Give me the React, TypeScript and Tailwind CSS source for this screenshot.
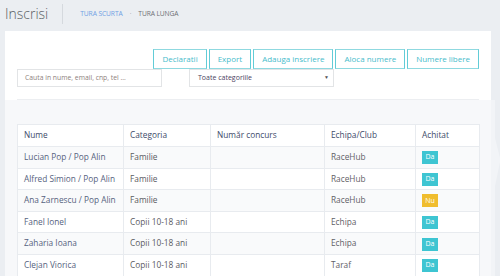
import React from "react";

const rows = [
  { name: "Lucian Pop / Pop Alin", cat: "Familie", club: "RaceHub", paid: true },
  { name: "Alfred Simion / Pop Alin", cat: "Familie", club: "RaceHub", paid: true },
  { name: "Ana Zarnescu / Pop Alin", cat: "Familie", club: "RaceHub", paid: false },
  { name: "Fanel Ionel", cat: "Copii 10-18 ani", club: "Echipa", paid: true },
  { name: "Zaharia Ioana", cat: "Copii 10-18 ani", club: "Echipa", paid: true },
  { name: "Clejan Viorica", cat: "Copii 10-18 ani", club: "Taraf", paid: true },
];

const buttons = ["Declaratii", "Export", "Adauga inscriere", "Aloca numere", "Numere libere"];

export default function App() {
  return (
    <div
      className="w-[500px] h-[276px] overflow-hidden bg-[#ebeef2] flex flex-col"
      style={{ fontFamily: '"Open Sans", "Noto Sans", sans-serif' }}
    >
      {/* header */}
      <div className="h-[31px] shrink-0 flex items-center pl-[5px]">
        <div className="text-[14px] leading-none font-light text-[#5a5e64] pb-[4px]">Inscrisi</div>
        <div className="w-px h-[20px] bg-[#d5d9de] ml-[14px] mb-[4px]" />
        <div className="flex items-center ml-[17px] text-[6.7px] uppercase pb-[2px] tracking-[-0.1px]">
          <span className="text-[#6f9fe4]">Tura scurta</span>
          <span className="text-[#9aa0a8] mx-[7px]">·</span>
          <span className="text-[#6d6f74]">Tura lunga</span>
        </div>
      </div>

      <div className="flex flex-1 min-h-0">
        {/* panel */}
        <div className="ml-[5px] w-[486px] bg-[#f7f8fa] flex flex-col">
          <div className="bg-white px-[12px] pt-[18px]">
            <div className="pb-[12px] border-b border-[#eceef1]">
              <div className="flex justify-end gap-[2px]">
                {buttons.map((b) => (
                  <div
                    key={b}
                    className="h-[20px] px-[8px] flex items-center border border-[#8fd9e0] border-x-[#62ccd7] text-[8px] text-[#47bccb] bg-white"
                  >
                    {b}
                  </div>
                ))}
              </div>
              <div className="flex items-center h-[18px]">
                <div className="w-[145px] h-[18px] border border-[#e2e4e6] flex items-center pl-[7px] text-[6.8px] text-[#8e817c]">
                  Cauta in nume, email, cnp, tel ...
                </div>
                <div className="ml-[27px] w-[145px] h-[18px] border border-[#e2e4e6] flex items-center justify-between pl-[8px] pr-[4px] text-[7px] text-[#4b4362]">
                  <span>Toate categoriile</span>
                  <span className="text-[5px] text-[#555]">▼</span>
                </div>
              </div>
            </div>
          </div>
          <div className="px-[12px] pt-[24px]">
            <table className="w-[462px] table-fixed border-collapse bg-white text-[8.3px]">
              <colgroup>
                <col className="w-[106px]" />
                <col className="w-[87px]" />
                <col className="w-[114px]" />
                <col className="w-[91px]" />
                <col className="w-[64px]" />
              </colgroup>
              <thead>
                <tr className="h-[22px] text-[#3d4a69]">
                  {["Nume", "Categoria", "Număr concurs", "Echipa/Club", "Achitat"].map((h) => (
                    <th key={h} className="border border-[#e8ebef] px-[6px] text-left font-normal">
                      {h}
                    </th>
                  ))}
                </tr>
              </thead>
              <tbody>
                {rows.map((r, i) => (
                  <tr key={r.name} className={`h-[21.6px] ${i % 2 === 0 ? "bg-[#f9fafb]" : "bg-white"}`}>
                    <td className="border border-[#e8ebef] px-[6px] text-[#56627e] whitespace-nowrap">{r.name}</td>
                    <td className="border border-[#e8ebef] px-[6px] text-[#5a5a5f]">{r.cat}</td>
                    <td className="border border-[#e8ebef] px-[6px]"></td>
                    <td className="border border-[#e8ebef] px-[6px] text-[#5f6066]">{r.club}</td>
                    <td className="border border-[#e8ebef] px-[6px]">
                      <span
                        className={`inline-flex items-center justify-center w-[16px] h-[13px] text-[7px] text-white ${
                          r.paid ? "bg-[#3ec5d2]" : "bg-[#f0bd2e]"
                        }`}
                      >
                        {r.paid ? "Da" : "Nu"}
                      </span>
                    </td>
                  </tr>
                ))}
              </tbody>
            </table>
          </div>
        </div>
        {/* right strip */}
        <div className="w-[9px] relative">
          <svg className="absolute left-0 top-[69px]" width="9" height="176" viewBox="0 0 9 176">
            <rect x="0" y="0" width="4" height="176" fill="#f2f4f7" />
            <polygon points="4,38 9,58 9,62 4,86" fill="#f2f4f7" />
          </svg>
        </div>
      </div>
    </div>
  );
}
